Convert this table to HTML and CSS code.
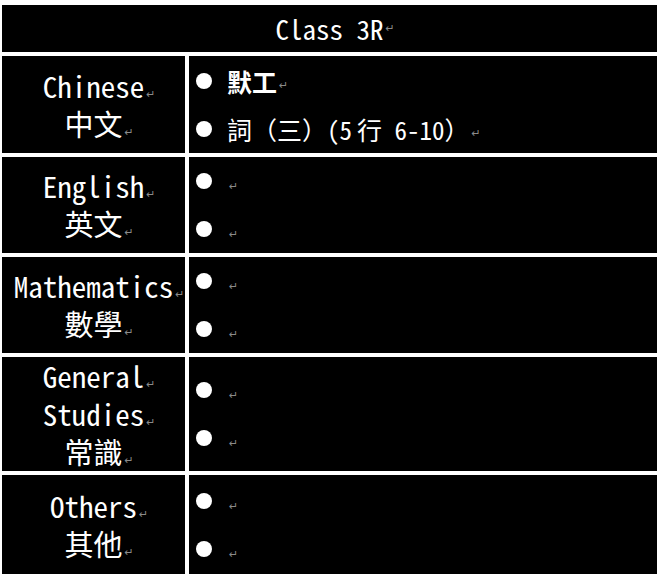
FILE: index.html
```html
<!DOCTYPE html>
<html lang="zh-Hant">
<head>
<meta charset="utf-8">
<title>Class 3R</title>
<link rel="stylesheet" href="styles.css">
</head>
<body>
<div class="sheet">
  <div class="cell head">Class 3R<span class="pm">↵</span></div>

  <div class="cell subj"><div class="ln">Chinese<span class="pm">↵</span></div><div class="ln">中文<span class="pm">↵</span></div></div>
  <div class="cell items">
    <div class="item"><span class="dot"></span><b class="bold">默工</b><span class="pm">↵</span></div>
    <div class="item"><span class="dot"></span>詞（三）(5<span class="sp"></span>行 6-10）<span class="pm">↵</span></div>
  </div>

  <div class="cell subj"><div class="ln">English<span class="pm">↵</span></div><div class="ln">英文<span class="pm">↵</span></div></div>
  <div class="cell items">
    <div class="item"><span class="dot"></span><span class="pm">↵</span></div>
    <div class="item"><span class="dot"></span><span class="pm">↵</span></div>
  </div>

  <div class="cell subj"><div class="ln">Mathematics<span class="pm">↵</span></div><div class="ln">數學<span class="pm">↵</span></div></div>
  <div class="cell items">
    <div class="item"><span class="dot"></span><span class="pm">↵</span></div>
    <div class="item"><span class="dot"></span><span class="pm">↵</span></div>
  </div>

  <div class="cell subj"><div class="ln">General<span class="pm">↵</span></div><div class="ln">Studies<span class="pm">↵</span></div><div class="ln">常識<span class="pm">↵</span></div></div>
  <div class="cell items">
    <div class="item"><span class="dot"></span><span class="pm">↵</span></div>
    <div class="item"><span class="dot"></span><span class="pm">↵</span></div>
  </div>

  <div class="cell subj"><div class="ln">Others<span class="pm">↵</span></div><div class="ln">其他<span class="pm">↵</span></div></div>
  <div class="cell items">
    <div class="item"><span class="dot"></span><span class="pm">↵</span></div>
    <div class="item"><span class="dot"></span><span class="pm">↵</span></div>
  </div>
</div>
</body>
</html>
```
FILE: styles.css
```css
html, body {
  margin: 0;
  background: #ffffff;
}
body {
  font-family: "Noto Sans Mono CJK TC", "Noto Sans CJK TC", monospace;
  color: #ffffff;
}
.sheet {
  display: grid;
  grid-template-columns: 183px 468px;
  grid-template-rows: 47px 97px 96px 96px 114px 100px;
  column-gap: 4px;
  row-gap: 4px;
  padding: 5px 2px 0 2px;
}
.cell {
  background: #000000;
  display: flex;
  flex-direction: column;
  justify-content: center;
}
.head {
  grid-column: 1 / 3;
  align-items: center;
  font-size: 27px;
  line-height: 47px;
  flex-direction: row;
  justify-content: center;
}
.subj {
  align-items: center;
  font-size: 29px;
  line-height: 38px;
  text-align: center;
  padding-bottom: 2px;
}
.ln {
  white-space: nowrap;
}
.items {
  padding-left: 7px;
  font-size: 25px;
  line-height: 48px;
}
.item {
  display: flex;
  align-items: center;
  height: 48px;
  white-space: pre;
}
.dot {
  width: 16px;
  height: 16px;
  border-radius: 50%;
  background: #ffffff;
  margin-right: 15px;
  flex: none;
}
.bold {
  font-weight: 700;
}
.sp {
  display: inline-block;
  width: 5px;
}
.pm {
  display: inline-block;
  width: 0;
  overflow: visible;
  font-family: "DejaVu Sans", sans-serif;
  font-size: 11px;
  line-height: 1;
  color: #8a8a8a;
  vertical-align: baseline;
  text-indent: 2px;
  white-space: nowrap;
}
.item .pm {
  align-self: center;
  margin-top: 10px;
}
```
